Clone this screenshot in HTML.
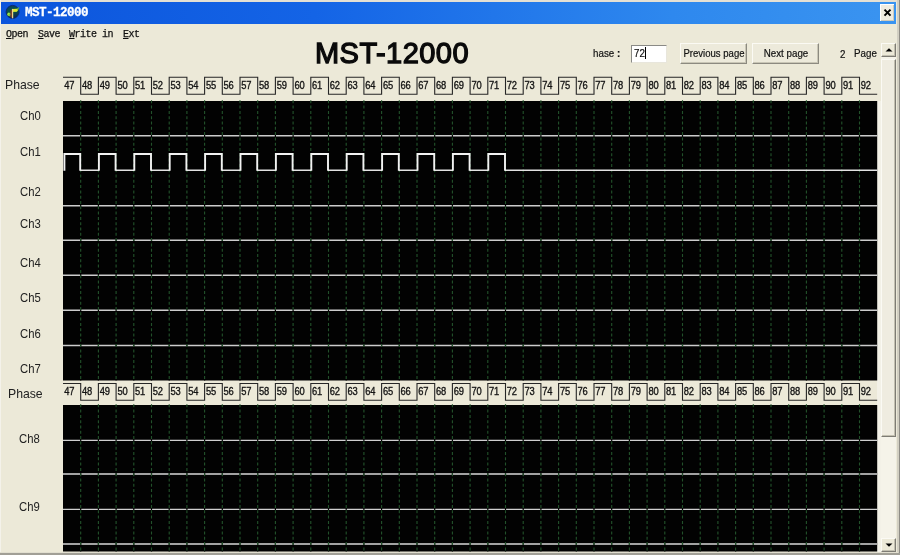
<!DOCTYPE html>
<html lang="en">
<head>
<meta charset="utf-8">
<title>MST-12000</title>
<style>
html,body{margin:0;padding:0;}
body{width:900px;height:555px;overflow:hidden;position:relative;background:#ece9d8;font-family:"Liberation Sans",sans-serif;color:#1c1c1c;}
#root{position:absolute;left:0;top:0;width:900px;height:555px;will-change:transform;}
.abs{position:absolute;}
.frame-t{left:0;top:0;width:900px;height:2px;background:#e4e0d4;}
.frame-l{left:0;top:0;width:1px;height:555px;background:#f4f2ea;}
.frame-r{left:898.5px;top:0;width:1.5px;height:555px;background:#8f8d86;}
.frame-r2{left:896.5px;top:0;width:2px;height:555px;background:#d2cfc2;}
.frame-b{left:0;top:553px;width:900px;height:2px;background:#a19f96;}
.frame-b2{left:0;top:551.5px;width:898px;height:1.5px;background:#e2dfd0;}
.title{left:1px;top:2px;width:895px;height:22px;background:linear-gradient(90deg,#0c55dc 0%,#1464e6 35%,#2e88ee 75%,#3a94f0 100%);}
.title-txt{left:25px;top:6px;font-family:"Liberation Mono",monospace;font-weight:bold;font-size:12.6px;line-height:15px;color:#fff;white-space:pre;letter-spacing:-0.55px;-webkit-text-stroke:0.3px #fff;}
.close{left:880px;top:4px;width:14px;height:17px;background:#efece0;box-shadow:inset 1px 1px 0 #fff, inset -1px -1px 0 #cfcbbb;}
.menu{top:28.1px;font-family:"Liberation Mono",monospace;font-size:10px;line-height:13px;white-space:pre;color:#111;letter-spacing:-0.5px;-webkit-text-stroke:0.25px #111;}
.menu u{text-decoration:underline;text-underline-offset:0.8px;}
.big{left:315px;top:36px;font-weight:normal;-webkit-text-stroke:1.3px #0a0a0a;font-size:29px;line-height:34px;color:#0a0a0a;white-space:pre;letter-spacing:0.45px;}
.lbl{position:absolute;font-size:13px;line-height:15px;white-space:pre;color:#222;transform-origin:0 0;}
.t11{font-size:11px;line-height:13px;white-space:pre;color:#111;-webkit-text-stroke:0.2px #111;transform-origin:0 0;transform:scaleX(0.89);}
.input{left:631px;top:45px;width:36px;height:17.5px;background:#fff;box-sizing:border-box;border:1px solid #8a8a86;border-right-color:#e8e6dc;border-bottom-color:#e8e6dc;}
.btn{overflow:visible;top:42.5px;height:21.5px;box-sizing:border-box;background:#edeadb;border:1px solid #fbfaf4;border-right-color:#8c8a80;border-bottom-color:#8c8a80;box-shadow:inset -1px -1px 0 #c9c6b6;text-align:center;font-size:11px;line-height:18px;color:#111;-webkit-text-stroke:0.2px #111;white-space:pre;}
.bt{position:absolute;left:50%;top:0;white-space:pre;}
.sb-track{left:881px;top:43px;width:15px;height:509px;background:#f5f3e9;}
.sb-btn{left:881px;width:15px;height:14px;box-sizing:border-box;background:#ece9d8;border:1px solid #fbfaf4;border-right-color:#7e7c74;border-bottom-color:#7e7c74;box-shadow:inset -1px -1px 0 #c2bfb0;}
.sb-thumb{left:881px;top:59px;width:15px;height:378.3px;box-sizing:border-box;background:#efece0;border:1px solid #fbfaf4;border-right-color:#7e7c74;border-bottom-color:#7e7c74;box-shadow:inset -1px -1px 0 #c2bfb0;}
svg.plot{position:absolute;left:0;top:0;}
svg .num text{font-family:"Liberation Sans",sans-serif;font-size:11px;fill:#141414;stroke:#141414;stroke-width:0.35px;letter-spacing:-0.2px;}
</style>
</head>
<body>
<div id="root">
<div class="abs frame-t"></div>
<div class="abs frame-l"></div>
<div class="abs frame-r2"></div>
<div class="abs frame-r"></div>
<div class="abs frame-b2"></div>
<div class="abs frame-b"></div>

<div class="abs title"></div>
<svg class="abs" style="left:5px;top:4px;filter:blur(0.35px)" width="16" height="16" viewBox="0 0 16 16">
<defs><linearGradient id="ig" x1="0" y1="0" x2="0.3" y2="1"><stop offset="0" stop-color="#0a3a66"/><stop offset="0.5" stop-color="#0c5544"/><stop offset="1" stop-color="#0a2c50"/></linearGradient></defs>
<circle cx="7.6" cy="7.9" r="6.5" fill="url(#ig)" stroke="#0a2470" stroke-width="0.9"/>
<path d="M8 4.9 L11.8 4.6 L14.4 2.8 L13.6 5.6 L12 7.8 L8 7.9 Z" fill="#5aa848"/>
<path d="M8 5 L12.3 4.9 L12.6 6.4 L11.6 7.7 L8 7.7 Z" fill="#dce42e"/>
<ellipse cx="3.9" cy="10.2" rx="1.6" ry="1.8" fill="#a6e64a"/>
<path d="M2.6 11.5 L5.4 8.6 L5.4 12.6 Z" fill="#7cc83c"/>
<rect x="5.5" y="6.2" width="1.3" height="7.2" fill="#8a2c1a"/>
<rect x="6.9" y="4.9" width="1.3" height="9.4" fill="#ead48c"/>
</svg>
<div class="abs title-txt">MST-12000</div>
<div class="abs close"></div>
<svg class="abs" style="left:883px;top:8px" width="9" height="9" viewBox="0 0 9 9"><path d="M1.5 1.6 L7.5 7.6 M7.5 1.6 L1.5 7.6" stroke="#000" stroke-width="2" fill="none"/></svg>

<div class="abs menu" style="left:6px"><u>O</u>pen</div>
<div class="abs menu" style="left:38px"><u>S</u>ave</div>
<div class="abs menu" style="left:69px"><u>W</u>rite in</div>
<div class="abs menu" style="left:123px"><u>E</u>xt</div>

<div class="abs big">MST-12000</div>

<div class="abs t11" style="left:593px;top:47px;transform:scaleX(0.89)">hase <b>:</b></div>
<div class="abs input"></div>
<div class="abs t11" style="left:634px;top:47px">72</div>
<div class="abs" style="left:645px;top:47px;width:1px;height:12px;background:#000"></div>
<div class="abs btn" style="left:680px;width:67px"><span class="bt" style="transform:translateX(-50%) scaleX(0.868)">Previous page</span></div>
<div class="abs btn" style="left:752px;width:67px"><span class="bt" style="transform:translateX(-50%) scaleX(0.89)">Next page</span></div>
<div class="abs t11" style="left:839.5px;top:47.6px">2</div>
<div class="abs t11" style="left:854px;top:46.7px">Page</div>

<div class="abs" style="left:877px;top:101px;width:4px;height:450.5px;background:#f3f1e7"></div>
<div class="abs sb-track"></div>
<div class="abs sb-btn" style="top:42.5px;height:14.5px"></div>
<div class="abs sb-thumb"></div>
<div class="abs sb-btn" style="top:537.5px"></div>
<svg class="abs" style="left:885px;top:48px" width="8" height="4" viewBox="0 0 8 4"><path d="M0.5 3.6 L4 0.2 L7.5 3.6 Z" fill="#000"/></svg>
<svg class="abs" style="left:885px;top:542.5px" width="8" height="4" viewBox="0 0 8 4"><path d="M0.5 0.4 L4 3.8 L7.5 0.4 Z" fill="#000"/></svg>

<svg class="plot" width="900" height="555" viewBox="0 0 900 555">
<rect x="63.0" y="101" width="814.2" height="279.5" fill="#020202"/>
<rect x="63.0" y="405" width="814.2" height="146.5" fill="#020202"/>
<g fill="none">
<line x1="63.0" y1="135.8" x2="877.2" y2="135.8" stroke="#cccccc" stroke-width="1.45"/>
<line x1="63.0" y1="205.8" x2="877.2" y2="205.8" stroke="#cccccc" stroke-width="1.45"/>
<line x1="63.0" y1="240.3" x2="877.2" y2="240.3" stroke="#cccccc" stroke-width="1.45"/>
<line x1="63.0" y1="275.3" x2="877.2" y2="275.3" stroke="#cccccc" stroke-width="1.45"/>
<line x1="63.0" y1="310.3" x2="877.2" y2="310.3" stroke="#cccccc" stroke-width="1.45"/>
<line x1="63.0" y1="345.4" x2="877.2" y2="345.4" stroke="#cccccc" stroke-width="1.45"/>
<line x1="63.0" y1="440.3" x2="877.2" y2="440.3" stroke="#cfcfcf" stroke-width="1.3"/>
<line x1="63.0" y1="474.1" x2="877.2" y2="474.1" stroke="#a2a2a2" stroke-width="2.0"/>
<line x1="63.0" y1="509.3" x2="877.2" y2="509.3" stroke="#cfcfcf" stroke-width="1.3"/>
<line x1="63.0" y1="544.0" x2="877.2" y2="544.0" stroke="#a2a2a2" stroke-width="2.0"/>
</g>
<g stroke="#020202" stroke-width="1.2" fill="none"><line x1="80.7" y1="101" x2="80.7" y2="380.5"/><line x1="98.4" y1="101" x2="98.4" y2="380.5"/><line x1="116.1" y1="101" x2="116.1" y2="380.5"/><line x1="133.8" y1="101" x2="133.8" y2="380.5"/><line x1="151.5" y1="101" x2="151.5" y2="380.5"/><line x1="169.2" y1="101" x2="169.2" y2="380.5"/><line x1="186.9" y1="101" x2="186.9" y2="380.5"/><line x1="204.6" y1="101" x2="204.6" y2="380.5"/><line x1="222.3" y1="101" x2="222.3" y2="380.5"/><line x1="240.0" y1="101" x2="240.0" y2="380.5"/><line x1="257.7" y1="101" x2="257.7" y2="380.5"/><line x1="275.4" y1="101" x2="275.4" y2="380.5"/><line x1="293.1" y1="101" x2="293.1" y2="380.5"/><line x1="310.8" y1="101" x2="310.8" y2="380.5"/><line x1="328.5" y1="101" x2="328.5" y2="380.5"/><line x1="346.2" y1="101" x2="346.2" y2="380.5"/><line x1="363.9" y1="101" x2="363.9" y2="380.5"/><line x1="381.6" y1="101" x2="381.6" y2="380.5"/><line x1="399.3" y1="101" x2="399.3" y2="380.5"/><line x1="417.0" y1="101" x2="417.0" y2="380.5"/><line x1="434.7" y1="101" x2="434.7" y2="380.5"/><line x1="452.4" y1="101" x2="452.4" y2="380.5"/><line x1="470.1" y1="101" x2="470.1" y2="380.5"/><line x1="487.8" y1="101" x2="487.8" y2="380.5"/><line x1="505.5" y1="101" x2="505.5" y2="380.5"/><line x1="523.2" y1="101" x2="523.2" y2="380.5"/><line x1="540.9" y1="101" x2="540.9" y2="380.5"/><line x1="558.6" y1="101" x2="558.6" y2="380.5"/><line x1="576.3" y1="101" x2="576.3" y2="380.5"/><line x1="594.0" y1="101" x2="594.0" y2="380.5"/><line x1="611.7" y1="101" x2="611.7" y2="380.5"/><line x1="629.4" y1="101" x2="629.4" y2="380.5"/><line x1="647.1" y1="101" x2="647.1" y2="380.5"/><line x1="664.8" y1="101" x2="664.8" y2="380.5"/><line x1="682.5" y1="101" x2="682.5" y2="380.5"/><line x1="700.2" y1="101" x2="700.2" y2="380.5"/><line x1="717.9" y1="101" x2="717.9" y2="380.5"/><line x1="735.6" y1="101" x2="735.6" y2="380.5"/><line x1="753.3" y1="101" x2="753.3" y2="380.5"/><line x1="771.0" y1="101" x2="771.0" y2="380.5"/><line x1="788.7" y1="101" x2="788.7" y2="380.5"/><line x1="806.4" y1="101" x2="806.4" y2="380.5"/><line x1="824.1" y1="101" x2="824.1" y2="380.5"/><line x1="841.8" y1="101" x2="841.8" y2="380.5"/><line x1="859.5" y1="101" x2="859.5" y2="380.5"/><line x1="80.7" y1="405" x2="80.7" y2="551.5"/><line x1="98.4" y1="405" x2="98.4" y2="551.5"/><line x1="116.1" y1="405" x2="116.1" y2="551.5"/><line x1="133.8" y1="405" x2="133.8" y2="551.5"/><line x1="151.5" y1="405" x2="151.5" y2="551.5"/><line x1="169.2" y1="405" x2="169.2" y2="551.5"/><line x1="186.9" y1="405" x2="186.9" y2="551.5"/><line x1="204.6" y1="405" x2="204.6" y2="551.5"/><line x1="222.3" y1="405" x2="222.3" y2="551.5"/><line x1="240.0" y1="405" x2="240.0" y2="551.5"/><line x1="257.7" y1="405" x2="257.7" y2="551.5"/><line x1="275.4" y1="405" x2="275.4" y2="551.5"/><line x1="293.1" y1="405" x2="293.1" y2="551.5"/><line x1="310.8" y1="405" x2="310.8" y2="551.5"/><line x1="328.5" y1="405" x2="328.5" y2="551.5"/><line x1="346.2" y1="405" x2="346.2" y2="551.5"/><line x1="363.9" y1="405" x2="363.9" y2="551.5"/><line x1="381.6" y1="405" x2="381.6" y2="551.5"/><line x1="399.3" y1="405" x2="399.3" y2="551.5"/><line x1="417.0" y1="405" x2="417.0" y2="551.5"/><line x1="434.7" y1="405" x2="434.7" y2="551.5"/><line x1="452.4" y1="405" x2="452.4" y2="551.5"/><line x1="470.1" y1="405" x2="470.1" y2="551.5"/><line x1="487.8" y1="405" x2="487.8" y2="551.5"/><line x1="505.5" y1="405" x2="505.5" y2="551.5"/><line x1="523.2" y1="405" x2="523.2" y2="551.5"/><line x1="540.9" y1="405" x2="540.9" y2="551.5"/><line x1="558.6" y1="405" x2="558.6" y2="551.5"/><line x1="576.3" y1="405" x2="576.3" y2="551.5"/><line x1="594.0" y1="405" x2="594.0" y2="551.5"/><line x1="611.7" y1="405" x2="611.7" y2="551.5"/><line x1="629.4" y1="405" x2="629.4" y2="551.5"/><line x1="647.1" y1="405" x2="647.1" y2="551.5"/><line x1="664.8" y1="405" x2="664.8" y2="551.5"/><line x1="682.5" y1="405" x2="682.5" y2="551.5"/><line x1="700.2" y1="405" x2="700.2" y2="551.5"/><line x1="717.9" y1="405" x2="717.9" y2="551.5"/><line x1="735.6" y1="405" x2="735.6" y2="551.5"/><line x1="753.3" y1="405" x2="753.3" y2="551.5"/><line x1="771.0" y1="405" x2="771.0" y2="551.5"/><line x1="788.7" y1="405" x2="788.7" y2="551.5"/><line x1="806.4" y1="405" x2="806.4" y2="551.5"/><line x1="824.1" y1="405" x2="824.1" y2="551.5"/><line x1="841.8" y1="405" x2="841.8" y2="551.5"/><line x1="859.5" y1="405" x2="859.5" y2="551.5"/></g>
<g stroke="#22502a" stroke-width="1.15" stroke-dasharray="3 2.3" fill="none"><line x1="80.7" y1="100.3" x2="80.7" y2="380.5"/><line x1="98.4" y1="100.3" x2="98.4" y2="380.5"/><line x1="116.1" y1="100.3" x2="116.1" y2="380.5"/><line x1="133.8" y1="100.3" x2="133.8" y2="380.5"/><line x1="151.5" y1="100.3" x2="151.5" y2="380.5"/><line x1="169.2" y1="100.3" x2="169.2" y2="380.5"/><line x1="186.9" y1="100.3" x2="186.9" y2="380.5"/><line x1="204.6" y1="100.3" x2="204.6" y2="380.5"/><line x1="222.3" y1="100.3" x2="222.3" y2="380.5"/><line x1="240.0" y1="100.3" x2="240.0" y2="380.5"/><line x1="257.7" y1="100.3" x2="257.7" y2="380.5"/><line x1="275.4" y1="100.3" x2="275.4" y2="380.5"/><line x1="293.1" y1="100.3" x2="293.1" y2="380.5"/><line x1="310.8" y1="100.3" x2="310.8" y2="380.5"/><line x1="328.5" y1="100.3" x2="328.5" y2="380.5"/><line x1="346.2" y1="100.3" x2="346.2" y2="380.5"/><line x1="363.9" y1="100.3" x2="363.9" y2="380.5"/><line x1="381.6" y1="100.3" x2="381.6" y2="380.5"/><line x1="399.3" y1="100.3" x2="399.3" y2="380.5"/><line x1="417.0" y1="100.3" x2="417.0" y2="380.5"/><line x1="434.7" y1="100.3" x2="434.7" y2="380.5"/><line x1="452.4" y1="100.3" x2="452.4" y2="380.5"/><line x1="470.1" y1="100.3" x2="470.1" y2="380.5"/><line x1="487.8" y1="100.3" x2="487.8" y2="380.5"/><line x1="505.5" y1="100.3" x2="505.5" y2="380.5"/><line x1="523.2" y1="100.3" x2="523.2" y2="380.5"/><line x1="540.9" y1="100.3" x2="540.9" y2="380.5"/><line x1="558.6" y1="100.3" x2="558.6" y2="380.5"/><line x1="576.3" y1="100.3" x2="576.3" y2="380.5"/><line x1="594.0" y1="100.3" x2="594.0" y2="380.5"/><line x1="611.7" y1="100.3" x2="611.7" y2="380.5"/><line x1="629.4" y1="100.3" x2="629.4" y2="380.5"/><line x1="647.1" y1="100.3" x2="647.1" y2="380.5"/><line x1="664.8" y1="100.3" x2="664.8" y2="380.5"/><line x1="682.5" y1="100.3" x2="682.5" y2="380.5"/><line x1="700.2" y1="100.3" x2="700.2" y2="380.5"/><line x1="717.9" y1="100.3" x2="717.9" y2="380.5"/><line x1="735.6" y1="100.3" x2="735.6" y2="380.5"/><line x1="753.3" y1="100.3" x2="753.3" y2="380.5"/><line x1="771.0" y1="100.3" x2="771.0" y2="380.5"/><line x1="788.7" y1="100.3" x2="788.7" y2="380.5"/><line x1="806.4" y1="100.3" x2="806.4" y2="380.5"/><line x1="824.1" y1="100.3" x2="824.1" y2="380.5"/><line x1="841.8" y1="100.3" x2="841.8" y2="380.5"/><line x1="859.5" y1="100.3" x2="859.5" y2="380.5"/><line x1="80.7" y1="404.3" x2="80.7" y2="551.5"/><line x1="98.4" y1="404.3" x2="98.4" y2="551.5"/><line x1="116.1" y1="404.3" x2="116.1" y2="551.5"/><line x1="133.8" y1="404.3" x2="133.8" y2="551.5"/><line x1="151.5" y1="404.3" x2="151.5" y2="551.5"/><line x1="169.2" y1="404.3" x2="169.2" y2="551.5"/><line x1="186.9" y1="404.3" x2="186.9" y2="551.5"/><line x1="204.6" y1="404.3" x2="204.6" y2="551.5"/><line x1="222.3" y1="404.3" x2="222.3" y2="551.5"/><line x1="240.0" y1="404.3" x2="240.0" y2="551.5"/><line x1="257.7" y1="404.3" x2="257.7" y2="551.5"/><line x1="275.4" y1="404.3" x2="275.4" y2="551.5"/><line x1="293.1" y1="404.3" x2="293.1" y2="551.5"/><line x1="310.8" y1="404.3" x2="310.8" y2="551.5"/><line x1="328.5" y1="404.3" x2="328.5" y2="551.5"/><line x1="346.2" y1="404.3" x2="346.2" y2="551.5"/><line x1="363.9" y1="404.3" x2="363.9" y2="551.5"/><line x1="381.6" y1="404.3" x2="381.6" y2="551.5"/><line x1="399.3" y1="404.3" x2="399.3" y2="551.5"/><line x1="417.0" y1="404.3" x2="417.0" y2="551.5"/><line x1="434.7" y1="404.3" x2="434.7" y2="551.5"/><line x1="452.4" y1="404.3" x2="452.4" y2="551.5"/><line x1="470.1" y1="404.3" x2="470.1" y2="551.5"/><line x1="487.8" y1="404.3" x2="487.8" y2="551.5"/><line x1="505.5" y1="404.3" x2="505.5" y2="551.5"/><line x1="523.2" y1="404.3" x2="523.2" y2="551.5"/><line x1="540.9" y1="404.3" x2="540.9" y2="551.5"/><line x1="558.6" y1="404.3" x2="558.6" y2="551.5"/><line x1="576.3" y1="404.3" x2="576.3" y2="551.5"/><line x1="594.0" y1="404.3" x2="594.0" y2="551.5"/><line x1="611.7" y1="404.3" x2="611.7" y2="551.5"/><line x1="629.4" y1="404.3" x2="629.4" y2="551.5"/><line x1="647.1" y1="404.3" x2="647.1" y2="551.5"/><line x1="664.8" y1="404.3" x2="664.8" y2="551.5"/><line x1="682.5" y1="404.3" x2="682.5" y2="551.5"/><line x1="700.2" y1="404.3" x2="700.2" y2="551.5"/><line x1="717.9" y1="404.3" x2="717.9" y2="551.5"/><line x1="735.6" y1="404.3" x2="735.6" y2="551.5"/><line x1="753.3" y1="404.3" x2="753.3" y2="551.5"/><line x1="771.0" y1="404.3" x2="771.0" y2="551.5"/><line x1="788.7" y1="404.3" x2="788.7" y2="551.5"/><line x1="806.4" y1="404.3" x2="806.4" y2="551.5"/><line x1="824.1" y1="404.3" x2="824.1" y2="551.5"/><line x1="841.8" y1="404.3" x2="841.8" y2="551.5"/><line x1="859.5" y1="404.3" x2="859.5" y2="551.5"/></g>
<path d="M80.2,170.2 L98.9,170.2 M115.6,170.2 L134.3,170.2 M151.0,170.2 L169.7,170.2 M186.4,170.2 L205.1,170.2 M221.8,170.2 L240.5,170.2 M257.2,170.2 L275.9,170.2 M292.6,170.2 L311.3,170.2 M328.0,170.2 L346.7,170.2 M363.4,170.2 L382.1,170.2 M398.8,170.2 L417.5,170.2 M434.2,170.2 L452.9,170.2 M469.6,170.2 L488.3,170.2 M505.0,170.2 L877.2,170.2" stroke="#e2e2e2" stroke-width="1.35" fill="none"/>
<path d="M64.4,170.8 L64.4,154.0 L80.2,154.0 L80.2,170.8 M98.9,170.8 L98.9,154.0 L115.6,154.0 L115.6,170.8 M134.3,170.8 L134.3,154.0 L151.0,154.0 L151.0,170.8 M169.7,170.8 L169.7,154.0 L186.4,154.0 L186.4,170.8 M205.1,170.8 L205.1,154.0 L221.8,154.0 L221.8,170.8 M240.5,170.8 L240.5,154.0 L257.2,154.0 L257.2,170.8 M275.9,170.8 L275.9,154.0 L292.6,154.0 L292.6,170.8 M311.3,170.8 L311.3,154.0 L328.0,154.0 L328.0,170.8 M346.7,170.8 L346.7,154.0 L363.4,154.0 L363.4,170.8 M382.1,170.8 L382.1,154.0 L398.8,154.0 L398.8,170.8 M417.5,170.8 L417.5,154.0 L434.2,154.0 L434.2,170.8 M452.9,170.8 L452.9,154.0 L469.6,154.0 L469.6,170.8 M488.3,170.8 L488.3,154.0 L505.0,154.0 L505.0,170.8" stroke="#f2f2f2" stroke-width="1.9" fill="none" stroke-linejoin="miter"/>
<g stroke="#262626" stroke-width="1.1" fill="none"><path d="M63.0,77.3 L80.7,77.3 L80.7,94.2 L98.4,94.2 L98.4,77.3 L116.1,77.3 L116.1,94.2 L133.8,94.2 L133.8,77.3 L151.5,77.3 L151.5,94.2 L169.2,94.2 L169.2,77.3 L186.9,77.3 L186.9,94.2 L204.6,94.2 L204.6,77.3 L222.3,77.3 L222.3,94.2 L240.0,94.2 L240.0,77.3 L257.7,77.3 L257.7,94.2 L275.4,94.2 L275.4,77.3 L293.1,77.3 L293.1,94.2 L310.8,94.2 L310.8,77.3 L328.5,77.3 L328.5,94.2 L346.2,94.2 L346.2,77.3 L363.9,77.3 L363.9,94.2 L381.6,94.2 L381.6,77.3 L399.3,77.3 L399.3,94.2 L417.0,94.2 L417.0,77.3 L434.7,77.3 L434.7,94.2 L452.4,94.2 L452.4,77.3 L470.1,77.3 L470.1,94.2 L487.8,94.2 L487.8,77.3 L505.5,77.3 L505.5,94.2 L523.2,94.2 L523.2,77.3 L540.9,77.3 L540.9,94.2 L558.6,94.2 L558.6,77.3 L576.3,77.3 L576.3,94.2 L594.0,94.2 L594.0,77.3 L611.7,77.3 L611.7,94.2 L629.4,94.2 L629.4,77.3 L647.1,77.3 L647.1,94.2 L664.8,94.2 L664.8,77.3 L682.5,77.3 L682.5,94.2 L700.2,94.2 L700.2,77.3 L717.9,77.3 L717.9,94.2 L735.6,94.2 L735.6,77.3 L753.3,77.3 L753.3,94.2 L771.0,94.2 L771.0,77.3 L788.7,77.3 L788.7,94.2 L806.4,94.2 L806.4,77.3 L824.1,77.3 L824.1,94.2 L841.8,94.2 L841.8,77.3 L859.5,77.3 L859.5,94.2 L877.2,94.2"/><path d="M63.0,383.5 L80.7,383.5 L80.7,400.2 L98.4,400.2 L98.4,383.5 L116.1,383.5 L116.1,400.2 L133.8,400.2 L133.8,383.5 L151.5,383.5 L151.5,400.2 L169.2,400.2 L169.2,383.5 L186.9,383.5 L186.9,400.2 L204.6,400.2 L204.6,383.5 L222.3,383.5 L222.3,400.2 L240.0,400.2 L240.0,383.5 L257.7,383.5 L257.7,400.2 L275.4,400.2 L275.4,383.5 L293.1,383.5 L293.1,400.2 L310.8,400.2 L310.8,383.5 L328.5,383.5 L328.5,400.2 L346.2,400.2 L346.2,383.5 L363.9,383.5 L363.9,400.2 L381.6,400.2 L381.6,383.5 L399.3,383.5 L399.3,400.2 L417.0,400.2 L417.0,383.5 L434.7,383.5 L434.7,400.2 L452.4,400.2 L452.4,383.5 L470.1,383.5 L470.1,400.2 L487.8,400.2 L487.8,383.5 L505.5,383.5 L505.5,400.2 L523.2,400.2 L523.2,383.5 L540.9,383.5 L540.9,400.2 L558.6,400.2 L558.6,383.5 L576.3,383.5 L576.3,400.2 L594.0,400.2 L594.0,383.5 L611.7,383.5 L611.7,400.2 L629.4,400.2 L629.4,383.5 L647.1,383.5 L647.1,400.2 L664.8,400.2 L664.8,383.5 L682.5,383.5 L682.5,400.2 L700.2,400.2 L700.2,383.5 L717.9,383.5 L717.9,400.2 L735.6,400.2 L735.6,383.5 L753.3,383.5 L753.3,400.2 L771.0,400.2 L771.0,383.5 L788.7,383.5 L788.7,400.2 L806.4,400.2 L806.4,383.5 L824.1,383.5 L824.1,400.2 L841.8,400.2 L841.8,383.5 L859.5,383.5 L859.5,400.2 L877.2,400.2"/></g>
<g class="num"><text transform="translate(64.3,88.7) scale(0.85,1)">47</text><text transform="translate(82.0,88.7) scale(0.85,1)">48</text><text transform="translate(99.7,88.7) scale(0.85,1)">49</text><text transform="translate(117.4,88.7) scale(0.85,1)">50</text><text transform="translate(135.1,88.7) scale(0.85,1)">51</text><text transform="translate(152.8,88.7) scale(0.85,1)">52</text><text transform="translate(170.5,88.7) scale(0.85,1)">53</text><text transform="translate(188.2,88.7) scale(0.85,1)">54</text><text transform="translate(205.9,88.7) scale(0.85,1)">55</text><text transform="translate(223.6,88.7) scale(0.85,1)">56</text><text transform="translate(241.3,88.7) scale(0.85,1)">57</text><text transform="translate(259.0,88.7) scale(0.85,1)">58</text><text transform="translate(276.7,88.7) scale(0.85,1)">59</text><text transform="translate(294.4,88.7) scale(0.85,1)">60</text><text transform="translate(312.1,88.7) scale(0.85,1)">61</text><text transform="translate(329.8,88.7) scale(0.85,1)">62</text><text transform="translate(347.5,88.7) scale(0.85,1)">63</text><text transform="translate(365.2,88.7) scale(0.85,1)">64</text><text transform="translate(382.9,88.7) scale(0.85,1)">65</text><text transform="translate(400.6,88.7) scale(0.85,1)">66</text><text transform="translate(418.3,88.7) scale(0.85,1)">67</text><text transform="translate(436.0,88.7) scale(0.85,1)">68</text><text transform="translate(453.7,88.7) scale(0.85,1)">69</text><text transform="translate(471.4,88.7) scale(0.85,1)">70</text><text transform="translate(489.1,88.7) scale(0.85,1)">71</text><text transform="translate(506.8,88.7) scale(0.85,1)">72</text><text transform="translate(524.5,88.7) scale(0.85,1)">73</text><text transform="translate(542.2,88.7) scale(0.85,1)">74</text><text transform="translate(559.9,88.7) scale(0.85,1)">75</text><text transform="translate(577.6,88.7) scale(0.85,1)">76</text><text transform="translate(595.3,88.7) scale(0.85,1)">77</text><text transform="translate(613.0,88.7) scale(0.85,1)">78</text><text transform="translate(630.7,88.7) scale(0.85,1)">79</text><text transform="translate(648.4,88.7) scale(0.85,1)">80</text><text transform="translate(666.1,88.7) scale(0.85,1)">81</text><text transform="translate(683.8,88.7) scale(0.85,1)">82</text><text transform="translate(701.5,88.7) scale(0.85,1)">83</text><text transform="translate(719.2,88.7) scale(0.85,1)">84</text><text transform="translate(736.9,88.7) scale(0.85,1)">85</text><text transform="translate(754.6,88.7) scale(0.85,1)">86</text><text transform="translate(772.3,88.7) scale(0.85,1)">87</text><text transform="translate(790.0,88.7) scale(0.85,1)">88</text><text transform="translate(807.7,88.7) scale(0.85,1)">89</text><text transform="translate(825.4,88.7) scale(0.85,1)">90</text><text transform="translate(843.1,88.7) scale(0.85,1)">91</text><text transform="translate(860.8,88.7) scale(0.85,1)">92</text><text transform="translate(64.3,395.4) scale(0.85,1)">47</text><text transform="translate(82.0,395.4) scale(0.85,1)">48</text><text transform="translate(99.7,395.4) scale(0.85,1)">49</text><text transform="translate(117.4,395.4) scale(0.85,1)">50</text><text transform="translate(135.1,395.4) scale(0.85,1)">51</text><text transform="translate(152.8,395.4) scale(0.85,1)">52</text><text transform="translate(170.5,395.4) scale(0.85,1)">53</text><text transform="translate(188.2,395.4) scale(0.85,1)">54</text><text transform="translate(205.9,395.4) scale(0.85,1)">55</text><text transform="translate(223.6,395.4) scale(0.85,1)">56</text><text transform="translate(241.3,395.4) scale(0.85,1)">57</text><text transform="translate(259.0,395.4) scale(0.85,1)">58</text><text transform="translate(276.7,395.4) scale(0.85,1)">59</text><text transform="translate(294.4,395.4) scale(0.85,1)">60</text><text transform="translate(312.1,395.4) scale(0.85,1)">61</text><text transform="translate(329.8,395.4) scale(0.85,1)">62</text><text transform="translate(347.5,395.4) scale(0.85,1)">63</text><text transform="translate(365.2,395.4) scale(0.85,1)">64</text><text transform="translate(382.9,395.4) scale(0.85,1)">65</text><text transform="translate(400.6,395.4) scale(0.85,1)">66</text><text transform="translate(418.3,395.4) scale(0.85,1)">67</text><text transform="translate(436.0,395.4) scale(0.85,1)">68</text><text transform="translate(453.7,395.4) scale(0.85,1)">69</text><text transform="translate(471.4,395.4) scale(0.85,1)">70</text><text transform="translate(489.1,395.4) scale(0.85,1)">71</text><text transform="translate(506.8,395.4) scale(0.85,1)">72</text><text transform="translate(524.5,395.4) scale(0.85,1)">73</text><text transform="translate(542.2,395.4) scale(0.85,1)">74</text><text transform="translate(559.9,395.4) scale(0.85,1)">75</text><text transform="translate(577.6,395.4) scale(0.85,1)">76</text><text transform="translate(595.3,395.4) scale(0.85,1)">77</text><text transform="translate(613.0,395.4) scale(0.85,1)">78</text><text transform="translate(630.7,395.4) scale(0.85,1)">79</text><text transform="translate(648.4,395.4) scale(0.85,1)">80</text><text transform="translate(666.1,395.4) scale(0.85,1)">81</text><text transform="translate(683.8,395.4) scale(0.85,1)">82</text><text transform="translate(701.5,395.4) scale(0.85,1)">83</text><text transform="translate(719.2,395.4) scale(0.85,1)">84</text><text transform="translate(736.9,395.4) scale(0.85,1)">85</text><text transform="translate(754.6,395.4) scale(0.85,1)">86</text><text transform="translate(772.3,395.4) scale(0.85,1)">87</text><text transform="translate(790.0,395.4) scale(0.85,1)">88</text><text transform="translate(807.7,395.4) scale(0.85,1)">89</text><text transform="translate(825.4,395.4) scale(0.85,1)">90</text><text transform="translate(843.1,395.4) scale(0.85,1)">91</text><text transform="translate(860.8,395.4) scale(0.85,1)">92</text></g>
</svg>
<div class="lbl" style="left:4.8px;top:77.3px;transform:scaleX(0.94)">Phase</div>
<div class="lbl" style="left:19.8px;top:108.2px;transform:scaleX(0.87)">Ch0</div>
<div class="lbl" style="left:19.8px;top:143.9px;transform:scaleX(0.87)">Ch1</div>
<div class="lbl" style="left:19.8px;top:183.7px;transform:scaleX(0.87)">Ch2</div>
<div class="lbl" style="left:19.8px;top:215.7px;transform:scaleX(0.87)">Ch3</div>
<div class="lbl" style="left:19.8px;top:254.9px;transform:scaleX(0.87)">Ch4</div>
<div class="lbl" style="left:19.8px;top:290.2px;transform:scaleX(0.87)">Ch5</div>
<div class="lbl" style="left:19.8px;top:325.5px;transform:scaleX(0.87)">Ch6</div>
<div class="lbl" style="left:19.8px;top:360.7px;transform:scaleX(0.87)">Ch7</div>
<div class="lbl" style="left:8.3px;top:386.2px;transform:scaleX(0.94)">Phase</div>
<div class="lbl" style="left:18.8px;top:430.7px;transform:scaleX(0.87)">Ch8</div>
<div class="lbl" style="left:18.8px;top:499.0px;transform:scaleX(0.87)">Ch9</div>
</div>
</body>
</html>
